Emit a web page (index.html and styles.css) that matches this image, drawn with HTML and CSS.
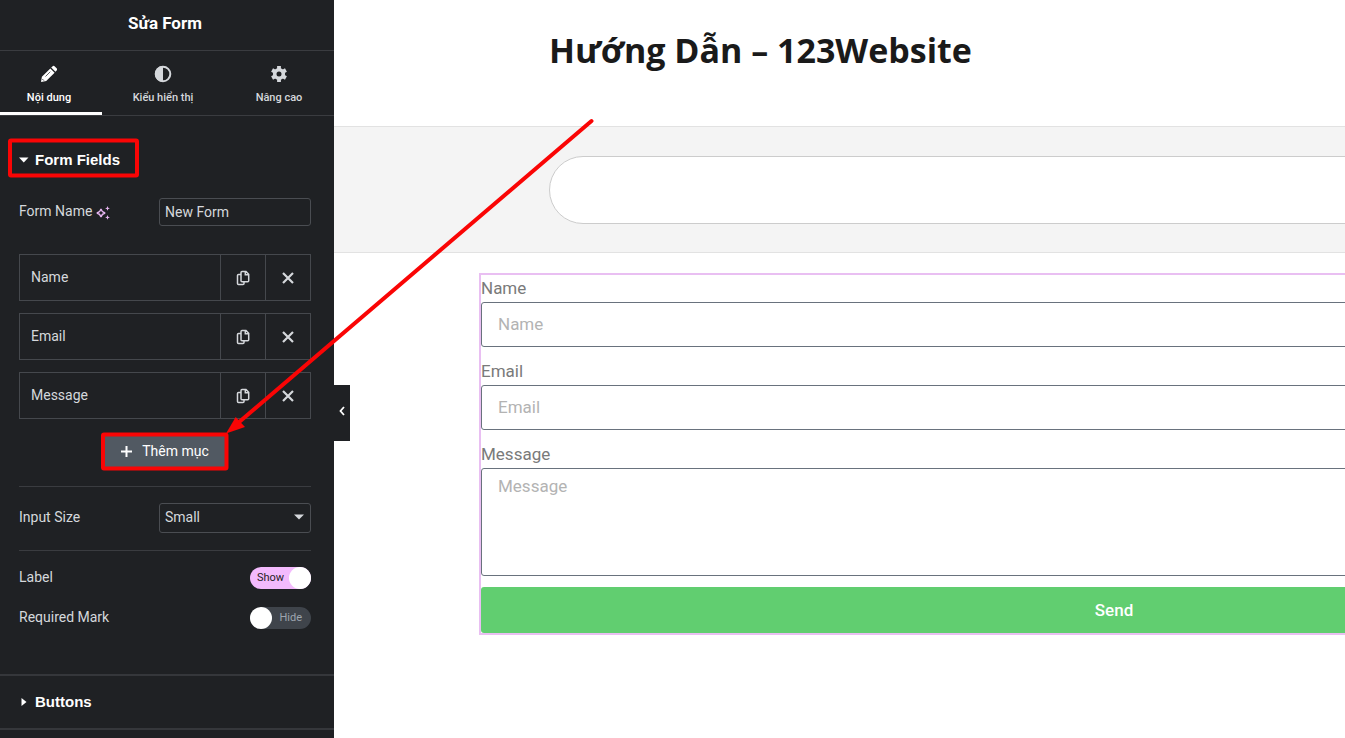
FILE: index.html
```html
<!DOCTYPE html>
<html lang="vi">
<head>
    <meta charset="UTF-8">
    <meta name="viewport" content="width=device-width, initial-scale=1.0">
    <title>Sửa Form</title>
    <link rel="stylesheet" href="styles.css">
</head>
<body>
    <!-- icons used more than once -->
    <svg class="sprite" aria-hidden="true">
        <symbol id="icon-copy" viewBox="0 0 14 16">
            <path d="M6 1.500h4L12.700 4.200v6.600a1 1 0 0 1-1 1H6a1 1 0 0 1-1-1V2.500a1 1 0 0 1 1-1zM9.300 1.500v3.200h3.400M5 4.500H2.500a1 1 0 0 0-1 1v8a1 1 0 0 0 1 1H7a1 1 0 0 0 1-1v-1.700" fill="none" stroke="currentColor" stroke-width="1.500"/>
        </symbol>
        <symbol id="icon-close" viewBox="0 0 12 12">
            <path d="M1 1l10 10M11 1L1 11" fill="none" stroke="currentColor" stroke-width="2.200"/>
        </symbol>
    </svg>

    <div class="editor">
        <aside class="panel">
            <header class="panel-header">
                <h1>Sửa Form</h1>
            </header>
            <nav class="tabs">
                <button type="button" class="tab active">
                    <svg width="16" height="16" viewBox="0 0 16 16"><path d="M0 16l.9-5.200L9.300 2.400l4.300 4.300-8.400 8.400zM10.200 1.500L11.400.4a1.700 1.700 0 0 1 2.400 0L15.600 2.200a1.700 1.700 0 0 1 0 2.400l-1.100 1.200z" fill="currentColor"/><path d="M4.500 10.500l4.800-4.800" stroke="#1f2124" stroke-width=".7"/><path d="M1.500 13.200l1.300 1.300" stroke="#1f2124" stroke-width="1"/></svg>
                    <span>Nội dung</span>
                </button>
                <button type="button" class="tab">
                    <svg width="18" height="18" viewBox="0 0 18 18"><circle cx="9" cy="9" r="7.300" fill="none" stroke="currentColor" stroke-width="2"/><path d="M9 1a8 8 0 0 0 0 16z" fill="currentColor"/></svg>
                    <span>Kiểu hiển thị</span>
                </button>
                <button type="button" class="tab">
                    <svg width="18" height="18" viewBox="0 0 18 18"><circle cx="9" cy="9" r="4.300" fill="none" stroke="currentColor" stroke-width="3.600"/><path d="M9 1v3M9 14v3M2.070 5l2.600 1.500M13.330 11.500l2.600 1.500M2.070 13l2.600-1.500M13.330 6.500l2.600-1.500" stroke="currentColor" stroke-width="3.800"/></svg>
                    <span>Nâng cao</span>
                </button>
            </nav>

            <section class="section">
                <button type="button" class="section-toggle">
                    <svg width="10" height="10" viewBox="0 0 10 10"><path d="M0 2.500h9.500L4.750 7.500z" fill="currentColor"/></svg>
                    Form Fields
                </button>

                <div class="controls">
                    <div class="control">
                        <label for="form-name">Form Name
                            <svg class="sparkle" width="14" height="14" viewBox="0 0 14 14"><path d="M5 2.800q.8 3.400 4.200 4.200Q5.800 7.800 5 11.200 4.200 7.800.8 7 4.200 6.200 5 2.800z" fill="none" stroke="currentColor" stroke-width="1.300"/><path d="M11.500 0l.7 1.700 1.700.7-1.700.7-.7 1.700-.7-1.700-1.700-.7 1.700-.7zM11.500 9l.7 1.700 1.700.7-1.700.7-.7 1.700-.7-1.700-1.700-.7 1.700-.7z" fill="currentColor"/></svg>
                        </label>
                        <input class="box" id="form-name" type="text" value="New Form">
                    </div>

                    <ul class="items">
                        <li class="item">
                            <button type="button" class="item-title">Name</button>
                            <button type="button" class="item-tool" aria-label="Duplicate"><svg width="14" height="16"><use href="#icon-copy"/></svg></button>
                            <button type="button" class="item-tool" aria-label="Remove"><svg width="12" height="12"><use href="#icon-close"/></svg></button>
                        </li>
                        <li class="item">
                            <button type="button" class="item-title">Email</button>
                            <button type="button" class="item-tool" aria-label="Duplicate"><svg width="14" height="16"><use href="#icon-copy"/></svg></button>
                            <button type="button" class="item-tool" aria-label="Remove"><svg width="12" height="12"><use href="#icon-close"/></svg></button>
                        </li>
                        <li class="item">
                            <button type="button" class="item-title">Message</button>
                            <button type="button" class="item-tool" aria-label="Duplicate"><svg width="14" height="16"><use href="#icon-copy"/></svg></button>
                            <button type="button" class="item-tool" aria-label="Remove"><svg width="12" height="12"><use href="#icon-close"/></svg></button>
                        </li>
                    </ul>
                    <button type="button" class="add-item">
                        <svg width="11" height="11" viewBox="0 0 11 11"><path d="M5.500 0v11M0 5.500h11" stroke="currentColor" stroke-width="2"/></svg>
                        Thêm mục
                    </button>

                    <div class="control bordered">
                        <label for="input-size">Input Size</label>
                        <div class="select-wrap">
                            <select class="box" id="input-size">
                                <option>Small</option>
                            </select>
                            <svg width="10" height="6" viewBox="0 0 10 6"><path d="M0 .5h10L5 5.500z" fill="currentColor"/></svg>
                        </div>
                    </div>

                    <div class="switches">
                        <div class="control">
                            <label for="show-label">Label</label>
                            <span class="switch">
                                <input type="checkbox" id="show-label" checked>
                                <span class="switch-text">Show</span>
                            </span>
                        </div>
                        <div class="control">
                            <label for="required-mark">Required Mark</label>
                            <span class="switch">
                                <input type="checkbox" id="required-mark">
                                <span class="switch-text">Hide</span>
                            </span>
                        </div>
                    </div>
                </div>
            </section>

            <section class="section closed">
                <button type="button" class="section-toggle">
                    <svg width="10" height="10" viewBox="0 0 10 10"><path d="M2.500 1v8L7.500 5z" fill="currentColor"/></svg>
                    Buttons
                </button>
            </section>
            <section class="section closed"></section>
        </aside>

        <main class="preview">
            <button type="button" class="collapse" aria-label="Collapse">
                <svg width="6" height="10" viewBox="0 0 6 10"><path d="M5 1L1.500 5 5 9" fill="none" stroke="currentColor" stroke-width="1.800"/></svg>
            </button>
            <div class="page">
                <header class="site-header">
                    <h2>Hướng Dẫn – 123Website</h2>
                </header>
                <div class="search-bar">
                    <input type="search" aria-label="Search">
                </div>
                <form class="contact-form">
                    <div class="field">
                        <label for="name">Name</label>
                        <input id="name" type="text" placeholder="Name">
                    </div>
                    <div class="field">
                        <label for="email">Email</label>
                        <input id="email" type="email" placeholder="Email">
                    </div>
                    <div class="field">
                        <label for="message">Message</label>
                        <textarea id="message" placeholder="Message"></textarea>
                    </div>
                    <button type="button" class="send">Send</button>
                </form>
            </div>
        </main>

        <!-- red boxes and arrow of the guide -->
        <svg class="marks" width="600" height="480" viewBox="0 0 600 480" aria-hidden="true">
            <rect x="10" y="140.500" width="127" height="35" rx="1"/>
            <rect x="103" y="434.500" width="123.500" height="34" rx="1"/>
            <path d="M591.500 121L238 423" stroke-linecap="round"/>
            <path class="head" d="M226 433.500L235.700 417 245 427z"/>
        </svg>
    </div>
</body>
</html>
```
FILE: styles.css
```css
* {
    box-sizing: border-box;
}

body {
    margin: 0;
    font-family: Roboto, "Liberation Sans", sans-serif;
    font-size: 14px;
    background: #fff;
}

button, input, select, textarea {
    font: inherit;
    color: inherit;
    margin: 0;
}

button {
    padding: 0;
    border: 0;
    background: none;
    cursor: pointer;
}

.sprite {
    display: none;
}

.editor {
    position: relative;
    display: flex;
    height: 100vh;
    overflow: hidden;
}

/* Left panel */
.panel {
    flex: 0 0 334px;
    overflow: hidden;
    background: #1f2124;
    color: #d5d8dc;
}

.panel-header {
    height: 51px;
    border-bottom: 1px solid #3a3c40;
    text-align: center;
}

.panel-header h1 {
    margin: 0;
    padding-right: 4px;
    font-size: 17px;
    font-weight: 700;
    line-height: 46px;
    color: #fff;
}

.tabs {
    display: grid;
    grid-template-columns: 98fr 130fr 102fr;
    height: 65px;
    padding-right: 4px;
    border-bottom: 1px solid #3a3c40;
}

.tab {
    position: relative;
    display: flex;
    flex-direction: column;
    align-items: center;
    gap: 6px;
    padding-top: 14px;
    font-size: 11px;
    font-weight: 500;
    line-height: 18px;
}

.tab svg {
    height: 18px;
}

.tab.active {
    color: #fff;
}

.tab.active::after {
    content: "";
    position: absolute;
    left: 0;
    right: -4px;
    bottom: 0;
    height: 3px;
    background: #fff;
}

.section-toggle {
    display: flex;
    align-items: center;
    gap: 6px;
    width: 100%;
    padding: 0 19px;
    font-family: "Liberation Sans", Arial, sans-serif;
    font-size: 15px;
    font-weight: 700;
    line-height: 52px;
    color: #fff;
}

.section {
    padding-top: 18px;
}

.section.closed {
    padding-top: 0;
    border-top: 2px solid #35373b;
}

.controls {
    padding: 12px 23px 45px 19px;
}

.control {
    display: flex;
    align-items: center;
    justify-content: space-between;
}

.control label {
    padding-bottom: 2px;
}

.sparkle {
    vertical-align: -4px;
    color: #e6b5f0;
}

.box {
    width: 152px;
    height: 28px;
    padding: 0 5px;
    border: 1px solid #4a4d52;
    border-radius: 3px;
    background: #1f2124;
}

.items {
    display: grid;
    gap: 12px;
    margin: 28px 0 15px;
    padding: 0;
    list-style: none;
}

.item {
    display: flex;
    height: 47px;
    border: 1px solid #45484d;
}

.item-title {
    flex: 1;
    padding: 0 0 2px 11px;
    text-align: left;
}

.item-tool {
    display: flex;
    align-items: center;
    justify-content: center;
    width: 45px;
    border-left: 1px solid #45484d;
}

.add-item {
    display: flex;
    align-items: center;
    justify-content: center;
    gap: 10px;
    width: 124px;
    height: 34px;
    margin: 0 auto;
    background: #515962;
    color: #fff;
}

.bordered {
    margin-top: 18px;
    padding: 16px 0 17px;
    border-top: 1px solid #3a3c40;
    border-bottom: 1px solid #3a3c40;
}

.select-wrap {
    position: relative;
    display: flex;
}

.select-wrap .box {
    height: 30px;
    padding-bottom: 2px;
    appearance: none;
}

.select-wrap svg {
    position: absolute;
    right: 7px;
    top: 11px;
    pointer-events: none;
}

.switches {
    display: grid;
    gap: 18px;
    padding-top: 16px;
}

.switch {
    position: relative;
    display: flex;
    width: 61px;
    height: 22px;
    font-size: 11px;
    line-height: 22px;
}

.switch input {
    appearance: none;
    width: 100%;
    height: 22px;
    border-radius: 11px;
    background: #3f444b;
}

/* knob */
.switch input::before {
    content: "";
    display: block;
    width: 22px;
    height: 22px;
    border-radius: 11px;
    background: #fff;
}

.switch input:checked {
    background: #f3bafd;
}

.switch input:checked::before {
    margin-left: auto;
}

.switch-text {
    position: absolute;
    right: 9px;
    color: #9da5ae;
    pointer-events: none;
}

.switch input:checked + .switch-text {
    left: 7px;
    right: auto;
    color: #1f2124;
}

/* Page preview */
.preview {
    position: relative;
    flex: 1;
    min-width: 0;
}

.collapse {
    position: absolute;
    left: 0;
    top: 385px;
    display: flex;
    align-items: center;
    justify-content: center;
    width: 16px;
    height: 56px;
    padding-bottom: 4px;
    background: #1f2124;
    color: #fff;
}

/* the site keeps its desktop width inside the preview */
.page {
    width: 1560px;
}

.site-header,
.search-bar {
    padding: 0 215px;
}

.site-header h2 {
    margin: 0;
    padding: 24px 0 50px;
    font-family: "Open Sans", sans-serif;
    font-size: 34px;
    font-weight: 700;
    line-height: 52px;
    color: #1a1a1a;
}

.search-bar {
    padding-top: 29px;
    padding-bottom: 28px;
    border-top: 1px solid #e2e2e2;
    border-bottom: 1px solid #e2e2e2;
    background: #f4f4f4;
}

.search-bar input {
    display: block;
    width: 100%;
    height: 68px;
    padding: 0 32px;
    border: 1px solid #ccc;
    border-radius: 34px;
    background: #fff;
    appearance: none;
}

.contact-form {
    display: grid;
    gap: 11px;
    margin: 22px 147px 0;
    outline: 2px solid #e9bff2;
    font-size: 17px;
    color: #7a7a7a;
}

.field {
    display: grid;
}

.field label {
    line-height: 27px;
}

.field input,
.field textarea {
    width: 100%;
    height: 45px;
    padding: 0 16px 2px;
    border: 1px solid #69727d;
    border-radius: 3px;
    background: #fff;
}

.field textarea {
    height: 108px;
    padding: 7px 16px;
    resize: none;
}

.field ::placeholder {
    color: #b3b3b3;
    opacity: 1;
}

.send {
    height: 46px;
    border-radius: 3px;
    background: #61ce70;
    font-weight: 500;
    color: #fff;
}

.marks {
    position: absolute;
    left: 0;
    top: 0;
    pointer-events: none;
    fill: none;
    stroke: #fa0505;
    stroke-width: 4;
}

.marks .head {
    fill: #fa0505;
    stroke: none;
}
```
